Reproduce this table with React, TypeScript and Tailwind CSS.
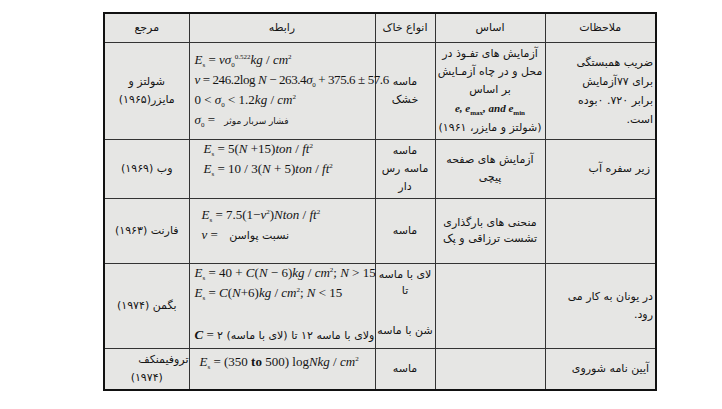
import React from "react";

const fa = "[font-family:'DejaVu_Sans',sans-serif]";
const mathF = "[font-family:'Liberation_Serif',serif]";

function I({ children }: { children: React.ReactNode }) {
  return <span className="italic">{children}</span>;
}
function Sub({ children }: { children: React.ReactNode }) {
  return <span className="relative top-[3px] text-[7px] not-italic">{children}</span>;
}
function Sup({ children }: { children: React.ReactNode }) {
  return <span className="relative top-[-5px] text-[7px] not-italic">{children}</span>;
}
function Es() {
  return (
    <>
      <I>E</I>
      <Sub>s</Sub>
    </>
  );
}
function Sig() {
  return (
    <>
      <I>σ</I>
      <Sub>0</Sub>
    </>
  );
}

function MLine({ children, className = "" }: { children: React.ReactNode; className?: string }) {
  return (
    <div dir="ltr" className={`${mathF} text-[13px] leading-[17px] whitespace-nowrap text-left ${className}`}>
      {children}
    </div>
  );
}

const cell = "border border-[#333] p-0 align-middle";

export default function App() {
  return (
    <div className="w-[722px] h-[409px] bg-white pt-[12px] pl-[103px] text-[#141414]">
      <table dir="rtl" className="table-fixed border-collapse w-[552px] border-2 border-[#111] bg-[#e6e6e4]">
        <colgroup>
          <col className="w-[111px]" />
          <col className="w-[110px]" />
          <col className="w-[60px]" />
          <col className="w-[186px]" />
          <col className="w-[85px]" />
        </colgroup>
        <tbody className={`${fa} text-[11px] leading-[18px]`}>
          <tr className="h-[29px]">
            <td className={`${cell} text-center`}>ملاحظات</td>
            <td className={`${cell} text-center`}>اساس</td>
            <td className={`${cell} text-center`}>انواع خاک</td>
            <td className={`${cell} text-center`}>رابطه</td>
            <td className={`${cell} text-center`}>مرجع</td>
          </tr>
          <tr className="h-[97px]">
            <td className={`${cell} text-right pr-[2px] leading-[19px]`}>
              <div>ضریب همبستگی</div>
              <div>برای ۷۷آزمایش</div>
              <div>برابر ۷۲۰. ۰بوده</div>
              <div>است.</div>
            </td>
            <td className={`${cell} text-center`}>
              <div>آزمایش های تفـوذ در</div>
              <div>محل و در چاه آزمـایش</div>
              <div>بر اساس</div>
              <div dir="ltr" className={`${mathF} text-[11px] italic font-bold`}>
                e, e<Sub>max</Sub>, and e<Sub>min</Sub>
              </div>
              <div>(شولتز و مایزر، ۱۹۶۱)</div>
            </td>
            <td className={`${cell} text-center`}>
              <div>ماسه</div>
              <div>خشک</div>
            </td>
            <td className={`${cell} align-top pt-[8px] pl-[5px] overflow-visible`}>
              <MLine className="leading-[17.5px]">
                <Es /> = <I>ν</I>
                <Sig />
                <Sup>0.522</Sup>
                <I>kg</I> / <I>cm</I>
                <Sup>2</Sup>
              </MLine>
              <MLine className="leading-[17.5px] text-[12px] tracking-[-0.4px]">
                <I>ν</I> = 246.2log <I>N</I> − 263.4
                <Sig /> + 375.6 ± 57.6
              </MLine>
              <MLine className="leading-[17.5px]">
                0 &lt; <Sig /> &lt; 1.2<I>kg</I> / <I>cm</I>
                <Sup>2</Sup>
              </MLine>
              <MLine className="leading-[17.5px]">
                <Sig /> ={" "}
                <span dir="rtl" className={`${fa} text-[9px] leading-none ml-[6px]`}>
                  فشار سربار موثر
                </span>
              </MLine>
            </td>
            <td className={`${cell} text-center`}>
              <div>شولتز و</div>
              <div>مایزر(۱۹۶۵)</div>
            </td>
          </tr>
          <tr className="h-[59px]">
            <td className={`${cell} text-right pr-[5px]`}>زیر سفره آب</td>
            <td className={`${cell} text-center`}>
              <div>آزمایش های صفحه</div>
              <div>پیچی</div>
            </td>
            <td className={`${cell} text-center`}>
              <div>ماسه</div>
              <div>ماسه رس</div>
              <div>دار</div>
            </td>
            <td className={`${cell} align-top pt-0 pl-[14px]`}>
              <MLine>
                <Es /> = 5(<I>N</I> +15)<I>ton</I> / <I>ft</I>
                <Sup>2</Sup>
              </MLine>
              <MLine>
                <Es /> = 10 / 3(<I>N</I> + 5)<I>ton</I> / <I>ft</I>
                <Sup>2</Sup>
              </MLine>
            </td>
            <td className={`${cell} text-center`}>وب (۱۹۶۹)</td>
          </tr>
          <tr className="h-[65px]">
            <td className={`${cell}`}></td>
            <td className={`${cell} text-center leading-[16px]`}>
              <div>منحنی های بارگذاری</div>
              <div>تشست ترزاقی و پک</div>
            </td>
            <td className={`${cell} text-center`}>ماسه</td>
            <td className={`${cell} align-top pt-[7px] pl-[12px]`}>
              <MLine>
                <Es /> = 7.5(1−<I>ν</I>
                <Sup>2</Sup>)<I>Nton</I> / <I>ft</I>
                <Sup>2</Sup>
              </MLine>
              <MLine>
                <I>ν</I> ={" "}
                <span dir="rtl" className={`${fa} text-[11px] leading-none ml-[8px]`}>
                  نسبت پواسن
                </span>
              </MLine>
            </td>
            <td className={`${cell} text-center`}>فارنت (۱۹۶۳)</td>
          </tr>
          <tr className="h-[85px]">
            <td className={`${cell} text-right pr-[2px]`}>
              <div>در یونان به کار می</div>
              <div>رود.</div>
            </td>
            <td className={`${cell}`}></td>
            <td className={`${cell} text-center align-top pt-[2px]`}>
              <div>لای با ماسه</div>
              <div className="leading-[14px]">تا</div>
              <div className="h-[24px]"></div>
              <div>شن با ماسه</div>
            </td>
            <td className={`${cell} align-top pt-0 pl-[5px]`}>
              <MLine>
                <Es /> = 40 + <I>C</I>(<I>N</I> − 6)<I>kg</I> / <I>cm</I>
                <Sup>2</Sup>; <I>N</I> &gt; 15
              </MLine>
              <MLine>
                <Es /> = <I>C</I>(<I>N</I>+6)<I>kg</I> / <I>cm</I>
                <Sup>2</Sup>; <I>N</I> &lt; 15
              </MLine>
              <div className="h-[22px]"></div>
              <MLine className="leading-[18px]">
                <span className="italic font-bold">C</span> ={" "}
                <span dir="rtl" className={`${fa} text-[11px] leading-none`}>
                  ولای با ماسه ۱۲ تا (لای با ماسه) ۲
                </span>
              </MLine>
            </td>
            <td className={`${cell} text-center`}>بگمن (۱۹۷۴)</td>
          </tr>
          <tr className="h-[42px]">
            <td className={`${cell} text-right pr-[6px]`}>آیین نامه شوروی</td>
            <td className={`${cell}`}></td>
            <td className={`${cell} text-center`}>ماسه</td>
            <td className={`${cell} align-top pt-[4px] pl-[10px]`}>
              <MLine>
                <Es /> = (350 <span className="font-bold">to</span> 500) log<I>Nkg</I> / <I>cm</I>
                <Sup>2</Sup>
              </MLine>
            </td>
            <td className={`${cell}`}>
              <div className="text-right">تروفیمنکف</div>
              <div className="text-center">(۱۹۷۴)</div>
            </td>
          </tr>
        </tbody>
      </table>
    </div>
  );
}
